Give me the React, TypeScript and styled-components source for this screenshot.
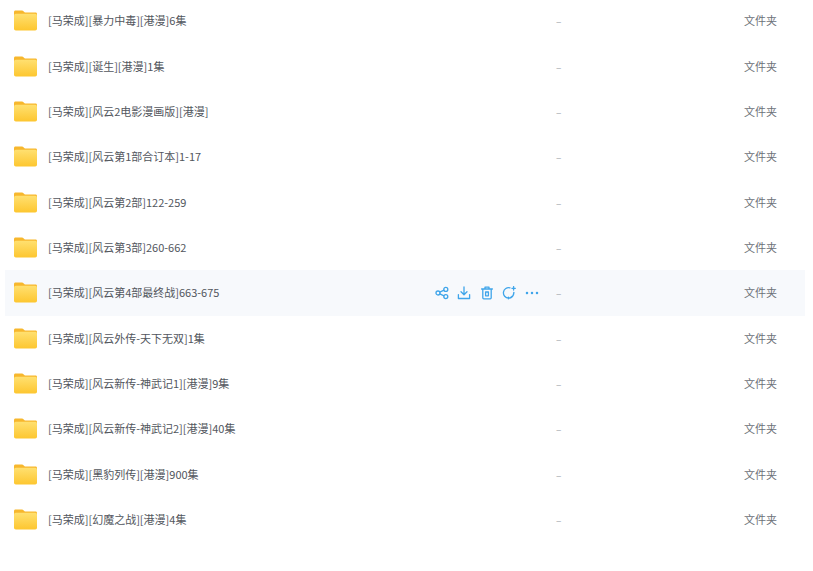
import React from 'react';
import styled, { createGlobalStyle } from 'styled-components';

const GlobalStyle = createGlobalStyle`
  html, body {
    margin: 0;
    padding: 0;
    background: #fff;
    overflow: hidden;
  }
  body {
    font-family: "Noto Sans CJK SC", "Liberation Sans", sans-serif;
  }
`;

const List = styled.div`
  width: 800px;
  margin: -2px 0 0 5px;
`;

const Row = styled.div<{ $hover?: boolean }>`
  display: flex;
  align-items: center;
  height: 45.36px;
  padding-left: 9px;
  box-sizing: border-box;
  background: ${(p) => (p.$hover ? '#f7f9fc' : 'transparent')};
`;

const FolderIcon = styled.svg`
  width: 23px;
  height: 21px;
  flex: none;
`;

const Name = styled.span`
  margin: 0 0 1px 11px;
  flex: 1;
  font-size: 11px;
  line-height: 16px;
  color: #52565d;
  white-space: nowrap;
`;

const Actions = styled.div`
  display: flex;
  align-items: center;
  gap: 8.6px;
  margin-right: 17px;
  color: #3fa5ea;
`;

const ActionIcon = styled.svg`
  width: 14px;
  height: 14px;
  fill: none;
  stroke: currentColor;
  stroke-width: 1.3;
  stroke-linecap: round;
  stroke-linejoin: round;
`;

const Size = styled.span`
  width: 188px;
  font-size: 10px;
  color: #a4a8ae;
`;

const Kind = styled.span`
  width: 61px;
  margin-bottom: 1px;
  font-size: 11px;
  color: #6d7178;
`;

const Folder = () => (
  <FolderIcon viewBox="0 0 23 21">
    <defs>
      <linearGradient id="folderBody" x1="0" y1="0" x2="0" y2="1">
        <stop offset="0" stopColor="#ffe070" />
        <stop offset="1" stopColor="#fdc62f" />
      </linearGradient>
    </defs>
    <path d="M1.5 0.5h6.4c.8 0 1.3.3 1.8.9l1.2 1.2h10.6c1 0 1.5.6 1.5 1.5v6H0V2c0-.9.6-1.5 1.5-1.5z" fill="#f7b72d" />
    <rect x="0" y="3.8" width="23" height="16.8" rx="1.8" fill="url(#folderBody)" />
  </FolderIcon>
);

const RowActions = () => (
  <Actions>
    <ActionIcon viewBox="0 0 14 14">
      <circle cx="3" cy="7" r="2" />
      <circle cx="10.8" cy="3.4" r="2" />
      <circle cx="10.8" cy="10.6" r="2" />
      <path d="M4.8 6.1l4.2-1.9M4.8 7.9l4.2 1.9" />
    </ActionIcon>
    <ActionIcon viewBox="0 0 14 14">
      <path d="M7 1v7.4M4 5.8L7 8.8 10 5.8M1.4 8.6v3.9h11.2V8.6" />
    </ActionIcon>
    <ActionIcon viewBox="0 0 14 14">
      <path d="M1.6 3h10.8M5 2.8V1.2h4v1.6M2.8 3v8.8c0 .6.4 1 1 1h6.4c.6 0 1-.4 1-1V3M5.6 6v3.8h2.8V6z" />
    </ActionIcon>
    <ActionIcon viewBox="0 0 14 14">
      <path d="M8 1.9A5.2 5.2 0 1 0 11.8 6.4c.1 2.2-.9 3.7-2.6 4.6L6.4 12.8v-1.6" />
      <path d="M11.6 0.6v3.4M9.9 2.3h3.4" />
    </ActionIcon>
    <ActionIcon viewBox="0 0 14 14">
      <circle cx="2" cy="7" r="0.6" />
      <circle cx="7" cy="7" r="0.6" />
      <circle cx="12" cy="7" r="0.6" />
    </ActionIcon>
  </Actions>
);

const names = [
  '[马荣成][暴力中毒][港漫]6集',
  '[马荣成][诞生][港漫]1集',
  '[马荣成][风云2电影漫画版][港漫]',
  '[马荣成][风云第1部合订本]1-17',
  '[马荣成][风云第2部]122-259',
  '[马荣成][风云第3部]260-662',
  '[马荣成][风云第4部最终战]663-675',
  '[马荣成][风云外传-天下无双]1集',
  '[马荣成][风云新传-神武记1][港漫]9集',
  '[马荣成][风云新传-神武记2][港漫]40集',
  '[马荣成][黑豹列传][港漫]900集',
  '[马荣成][幻魔之战][港漫]4集',
];

export default function App() {
  return (
    <>
      <GlobalStyle />
      <List>
        {names.map((name, i) => (
          <Row key={name} $hover={i === 6}>
            <Folder />
            <Name>{name}</Name>
            {i === 6 && <RowActions />}
            <Size>–</Size>
            <Kind>文件夹</Kind>
          </Row>
        ))}
      </List>
    </>
  );
}
